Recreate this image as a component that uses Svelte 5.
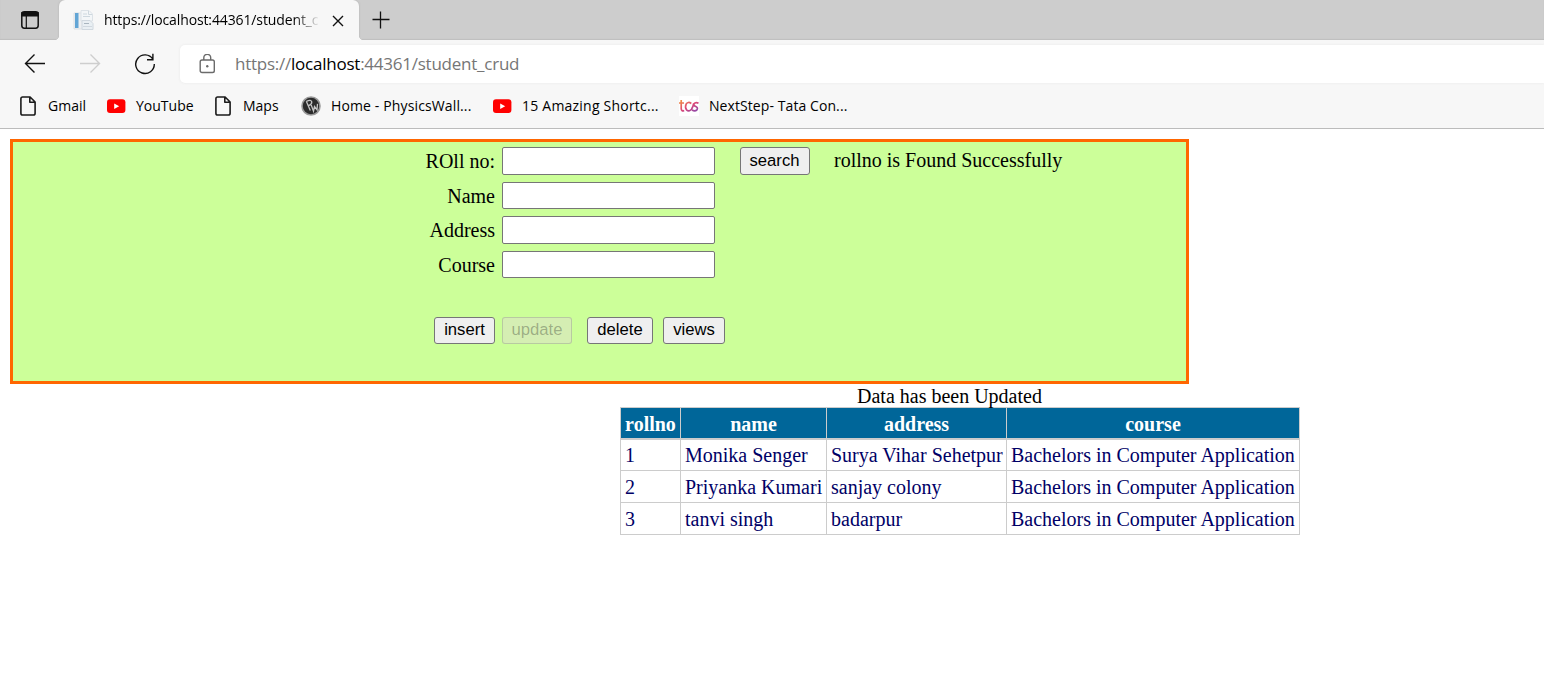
<script>
  const bookmarks = [
    { icon: 'page', label: 'Gmail', width: 87, spacing: 0 },
    { icon: 'youtube', label: 'YouTube', width: 108, spacing: 0 },
    { icon: 'page', label: 'Maps', width: 86, spacing: 0 },
    { icon: 'pw', label: 'Home - PhysicsWall...', width: 192, spacing: 0.13 },
    { icon: 'youtube', label: '15 Amazing Shortc...', width: 186, spacing: 0.22 },
    { icon: 'tcs', label: 'NextStep- Tata Con...', width: 190, spacing: 0.08 }
  ];
  const fields = ['ROll no:', 'Name', 'Address', 'Course'];
  const columns = ['rollno', 'name', 'address', 'course'];
  const rows = [
    ['1', 'Monika Senger', 'Surya Vihar Sehetpur', 'Bachelors in Computer Application'],
    ['2', 'Priyanka Kumari', 'sanjay colony', 'Bachelors in Computer Application'],
    ['3', 'tanvi singh', 'badarpur', 'Bachelors in Computer Application']
  ];
</script>

<div class="browser">
  <header>
    <div class="tabs">
      <div class="workspace">
        <svg width="18" height="18" viewBox="0 0 18 18" fill="none" stroke="#111" stroke-width="1.5">
          <rect x=".8" y=".8" width="16.4" height="16.4" rx="2.6" />
          <path d="M1 1.8h16v3H1z" fill="#111" />
          <path d="M5.3 5v12" stroke-width="1.2" />
        </svg>
      </div>
      <div class="tab">
        <svg class="favicon" width="21" height="21" viewBox="0 0 21 21">
          <path d="M1 3h12v16H1z" fill="#eef0f2" stroke="#dde0e4" />
          <path d="M2 3h3.5v15H2z" fill="#62a5d5" />
          <path d="M8 .5h8l3.5 3.5v7H8z" fill="#f3f6f8" stroke="#dce2e7" />
          <path d="M15.5 1v3.5H19M10 4h4M10 6.5h7" fill="none" stroke="#ced8df" />
          <path d="M9 10.5h8l3 3v6H9z" fill="#e9eff3" stroke="#d0d8df" />
          <path d="M11 13.5h5" stroke="#a9b5bf" /><path d="M10 16.5h9" stroke="#d0d8df" />
        </svg>
        <span class="title">https://localhost:44361/student_c</span>
        <svg class="close" width="12" height="12" viewBox="0 0 12 12" stroke="#111" stroke-width="1.4"><path d="M1 1l10 10M11 1L1 11" /></svg>
      </div>
      <svg class="plus" width="18" height="18" viewBox="0 0 18 18" stroke="#111" stroke-width="1.3"><path d="M.5 8.5h17M8.5 .5v17" /></svg>
    </div>

    <div class="toolbar">
      <svg width="22" height="20" viewBox="0 0 22 20" fill="none" stroke="#111" stroke-width="1.4"><path d="M21 9.5H1.5M10.5 .5l-9 9 9 9" /></svg>
      <svg width="22" height="20" viewBox="0 0 22 20" fill="none" stroke="#cecece" stroke-width="1.4"><path d="M1 9.5h19.5M11.5 .5l9 9-9 9" /></svg>
      <svg width="22" height="22" viewBox="0 0 22 22" fill="none" stroke="#111" stroke-width="1.4"><path d="M18.9 6.3A9.3 9.3 0 1 0 20.3 11M18.9 .8v5.9h-5.9" /></svg>
      <div class="address">
        <svg width="17" height="20" viewBox="0 0 17 20" fill="none" stroke="#6b6b6b" stroke-width="1.4">
          <rect x="1.2" y="6" width="14.1" height="12.5" rx="1.8" />
          <path d="M4.8 6V3.8a3.45 3.45 0 0 1 6.9 0V6" />
          <circle cx="8.25" cy="12.2" r="1.2" fill="#6b6b6b" stroke="none" />
        </svg>
        <span class="url">https://<b>localhost</b>:44361/student_crud</span>
      </div>
    </div>

    <nav>
      {#each bookmarks as item}
        <div class="bookmark {item.icon}" style:width="{item.width}px">
          {#if item.icon === 'page'}
            <svg width="18" height="20" viewBox="0 0 18 20" fill="none" stroke="#1b1b1b" stroke-width="1.6" stroke-linejoin="round">
              <path d="M2.4 1h7.7l5 5v11.2q0 1.8-1.8 1.8H2.6q-1.7 0-1.7-1.8V2.8Q.9 1 2.6 1zM9.8 1v5.3h5.2" />
            </svg>
          {:else if item.icon === 'youtube'}
            <svg width="19" height="20" viewBox="0 0 19 20"><rect y="3.2" width="18.4" height="13.8" rx="3" fill="#f00" /><path d="M7.2 7.4l5 2.8-5 2.8z" fill="#fff" /></svg>
          {:else if item.icon === 'pw'}
            <svg width="20" height="20" viewBox="0 0 20 20" fill="none">
              <circle cx="10" cy="10" r="9" fill="#2b2b2b" stroke="#999" stroke-width="1.6" />
              <path d="M5.3 5.2l4 9.3M5.5 5.3q4.7-2.2 5.3.7 0 2.5-3.3 3.6M10.2 9l2.3 6.2 1-4.7 2.5 3.2.5-5.8" stroke="#c4c4c4" stroke-width="1.3" />
            </svg>
          {:else}
            <svg width="20" height="20" viewBox="0 0 20 20" fill="none" stroke-width="1.7">
              <defs><linearGradient id="warm" x1="0" y1="0" x2="1" y2="1"><stop stop-color="#f39a3d" /><stop offset=".55" stop-color="#dc4777" /><stop offset="1" stop-color="#8949ad" /></linearGradient></defs>
              <path d="M0 0h20v20H0z" fill="#fff" />
              <path d="M2.2 4v8.5q0 2.8 3 2.2M0 7h5M12.3 7.5Q9.2 5.2 7.2 8q-1.5 3.2.3 5.8 2.5 2.3 5-.6 1.7-2.8 2-5.2 2.3-2.2 5-.7M15 8q-.6 1.6 1.8 2.5 2.7 1.3 1 3.5-2 1.6-4.8 0" stroke="url(#warm)" />
            </svg>
          {/if}
          <span style:letter-spacing="{item.spacing}px">{item.label}</span>
        </div>
      {/each}
    </nav>
  </header>

  <main>
    <form>
      <div class="search-row">
        <div class="fields">
          {#each fields as label, i}
            <label for="field{i}">{label}</label>
            <input id="field{i}" type="text" />
          {/each}
        </div>
        <button class="search" type="button">search</button>
        <span class="status">rollno is Found Successfully</span>
      </div>
      <div class="actions">
        <button class="insert" type="button">insert</button>
        <button class="update" type="button" disabled>update</button>
        <button class="delete" type="button">delete</button>
        <button class="views" type="button">views</button>
      </div>
    </form>

    <p>Data has been Updated</p>
    <table>
      <colgroup><col class="c1" /><col class="c2" /><col class="c3" /><col class="c4" /></colgroup>
      <thead><tr>{#each columns as column}<th>{column}</th>{/each}</tr></thead>
      <tbody>
        {#each rows as row}
          <tr>{#each row as cell}<td>{cell}</td>{/each}</tr>
        {/each}
      </tbody>
    </table>
  </main>
</div>

<style>
  :global(body) { margin: 0; background: #fff; }
  * { box-sizing: border-box; }
  svg { display: block; flex: none; }
  .browser { width: 1544px; height: 691px; overflow: hidden; font-family: "Liberation Serif", serif; font-size: 20px; color: #000; }
  header { height: 129px; background: #f7f7f7; border-bottom: 1px solid #bcbcbc; font-family: "Open Sans", sans-serif; }
  .tabs { height: 40px; display: flex; background: #cdcdcd; box-shadow: inset 0 -1px 1px #bfbfbf; }
  .workspace { width: 59px; padding: 11px 0 0 21px; }
  .tab { position: relative; width: 300px; height: 40px; padding-left: 14px; border-radius: 6px 6px 0 0; background: #f7f7f7; display: flex; align-items: center; box-shadow: 0 0 2px #aaa; clip-path: inset(0 -6px 0 -6px); }
  .tab::before, .tab::after { content: ""; position: absolute; bottom: 0; width: 5px; height: 5px; }
  .tab::before { left: -5px; background: radial-gradient(circle at 0 0, transparent 5px, #f7f7f7 5.5px); }
  .tab::after { right: -5px; background: radial-gradient(circle at 100% 0, transparent 5px, #f7f7f7 5.5px); }
  .title { width: 216px; margin-left: 10px; padding-bottom: 2px; overflow: hidden; white-space: nowrap; font-size: 14px; letter-spacing: -.12px; -webkit-mask-image: linear-gradient(90deg, #000 88%, transparent); mask-image: linear-gradient(90deg, #000 88%, transparent); }
  .close { margin-left: 12px; margin-top: 1px; }
  .plus { margin: 11px 0 0 13px; }
  .toolbar { height: 48px; display: flex; align-items: center; padding-left: 24px; }
  .toolbar > svg { margin-right: 33px; }
  .toolbar > svg:nth-child(3) { margin-right: 24px; }
  .address { flex: 1; height: 38px; background: #fff; border-radius: 5px 0 0 5px; display: flex; align-items: center; padding-left: 19px; box-shadow: 0 0 3px #e8e8e8; }
  .url { margin-left: 19px; padding-bottom: 2px; font-size: 17px; letter-spacing: -.24px; color: #767676; white-space: nowrap; }
  .url b { color: #000; font-weight: 400; }
  nav { display: flex; padding-left: 20px; height: 36px; align-items: center; }
  .bookmark { display: flex; align-items: center; gap: 10px; font-size: 14px; white-space: nowrap; flex: none; }
  .bookmark span { padding-bottom: 2px; }

  main { padding: 10px 0 0 10px; }
  form { width: 1179px; height: 245px; border: 3px solid #f60; background: #cf9; padding: 5px 0 0; }
  .search-row { display: flex; align-items: flex-start; height: 131px; }
  .fields { display: grid; grid-template-columns: 482px 213px; grid-template-rows: 28px 27px 28px 27px; column-gap: 7px; row-gap: 7px; }
  label { text-align: right; line-height: 28px; }
  label:nth-of-type(odd) { line-height: 29px; }
  input { width: 213px; height: 100%; padding: 0; border: 1px solid #767676; border-radius: 2px; background: #fff; }
  button { padding: 0 0 1px; border: 1px solid #767676; border-radius: 3px; background: #efefef; color: #000; font: 16.67px/24px "Liberation Sans", sans-serif; height: 27px; flex: none; }
  .search { width: 70px; height: 28px; margin-left: 25px; padding-right: 1px; }
  .status { margin-left: 24px; line-height: 26px; white-space: nowrap; }
  .actions { display: flex; padding: 39px 0 0 421px; }
  .insert { width: 61px; }
  .update { width: 70px; margin-left: 7px; color: rgba(16,16,16,.3); background: #d5eeb3; border-color: rgba(118,118,118,.3); }
  .delete { width: 66px; margin-left: 15px; }
  .views { width: 62px; margin-left: 10px; }
  p { margin: 0 0 0 847px; height: 23px; line-height: 24px; }
  table { width: 680px; margin-left: 610px; table-layout: fixed; border-collapse: separate; border-spacing: 0; border-left: 1px solid #ccc; border-top: 1px solid #ccc; }
  .c1 { width: 60px; } .c2 { width: 146px; } .c3 { width: 180px; } .c4 { width: 293px; }
  th, td { height: 32px; padding: 0 0 0 4px; border-right: 1px solid #ccc; border-bottom: 1px solid #ccc; line-height: 28px; white-space: nowrap; text-align: left; }
  th { padding: 1px 0 0; border-bottom-width: 2px; background: #069; color: #fff; text-align: center; }
  td { color: #006; }
  tbody tr:first-child td { height: 31px; }
</style>
